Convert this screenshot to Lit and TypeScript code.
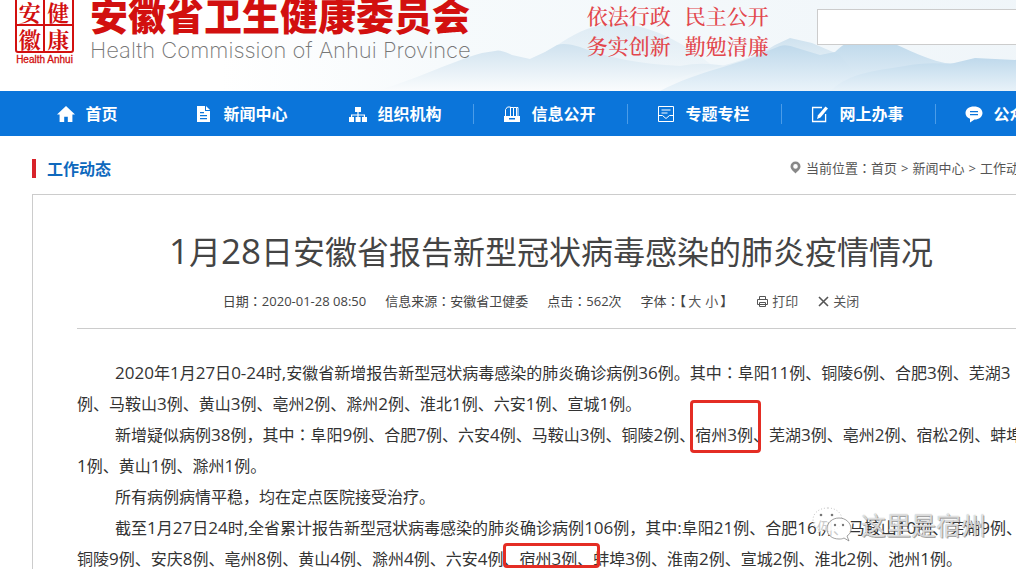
import { LitElement, html, css, svg } from "lit";
import { customElement, property } from "lit/decorators.js";

const navIcons: Record<string, unknown> = {
  home: svg`<path fill="currentColor" d="M9 1 0 9.6h2.6V17h4.6v-5.2h3.6V17h4.6V9.600H18z"/>`,
  news: svg`<path fill="currentColor" fill-rule="evenodd" d="M2 1h8v5h5v11H2zM11 1l4 4h-4zM5 7v1.300h4V7zM5 10v1.300h7V10zM5 13v1.300h7V13z"/>`,
  org: svg`<path fill="currentColor" d="M6 2h6v5H9.600v2.400H16V12h2v5h-5v-5h1.800v-1.400H9.600V12h2v5h-5v-5h1.800v-1.400H3.200V12H5v5H0v-5h2V9.400h6.400V7H6z"/>`,
  info: svg`<g fill="none" stroke="currentColor"><path d="M2.500 11V4.500l2-2.500h3v9M7.500 2.500h3V11M10.500 2.500h3V11M13.500 2.500H15V11"/></g><path fill="currentColor" fill-rule="evenodd" d="M1 11h16v6H1zM6 13v1.500h6V13z"/>`,
  topic: svg`<g fill="none" stroke="currentColor"><path d="M1.500 1.500h15v15h-15zM4.500 5h9M4.500 8h6M1.500 10.500h4l3.500 3 3.500-3h4"/></g>`,
  work: svg`<path fill="none" stroke="currentColor" stroke-width="1.300" d="M11 2.500H1.600v14h13V9"/><path fill="currentColor" d="m14.500 1.500 2.500 2-7.500 9-3.500 1.500 1-3.700z"/>`,
  chat: svg`<path fill="currentColor" fill-rule="evenodd" d="M9 1.500c5 0 8.500 2.700 8.500 6.500S14 14.500 9.500 14.500L5 17.500v-3.700C2 12.700.5 10.500.5 8 .5 4.200 4 1.500 9 1.500zM5 6v1.300h8V6zM5 9v1.300h8V9z"/>`,
};

const NAV = [
  { icon: "home", label: "首页" },
  { icon: "news", label: "新闻中心" },
  { icon: "org", label: "组织机构" },
  { icon: "info", label: "信息公开" },
  { icon: "topic", label: "专题专栏" },
  { icon: "work", label: "网上办事" },
  { icon: "chat", label: "公众互动" },
];

/** Sets figures in the Latin face and colons in a centred face. */
function typeset(text: string) {
  return text.split(/([0-9\-,:]+|：)/).map((part) =>
    part === "：" ? html`<span class="colon">：</span>` : /^[0-9\-,:]+$/.test(part) ? html`<span class="num">${part}</span>` : part
  );
}

const typeStyles = css`
  .num { font-family: "Open Sans", sans-serif; }
  .colon { font-family: "Noto Sans CJK TC", sans-serif; }
  a { color: inherit; text-decoration: none; }
`;

@customElement("site-header")
class SiteHeader extends LitElement {
  static styles = css`
    :host { display: block; position: relative; height: 91px; overflow: hidden; background: #fff; }
    .hills { position: absolute; inset: 0; width: 100%; height: 100%; }
    .bar { position: relative; height: 100%; box-sizing: border-box; padding: 0 32px 24px 14px; display: flex; align-items: flex-end; }
    .brand { display: flex; align-items: flex-end; gap: 15px; color: #d2100f; }
    .logo { width: 61px; text-align: center; }
    .seal { display: grid; grid-template-columns: 1fr 1fr; margin: 0 1px; border: 2px solid; border-radius: 3px; font: 700 22px/25px "Noto Serif CJK SC", "Noto Sans CJK SC", serif; }
    .seal span:nth-child(odd) { border-right: 2px solid; }
    .seal span:nth-child(-n + 2) { border-bottom: 2px solid; }
    .sub { font: 10px/14px "Liberation Sans", Arial, sans-serif; -webkit-text-stroke: 0.3px; white-space: nowrap; }
    .name { margin: 0; font: 900 38px/38px "Noto Sans CJK SC", sans-serif; white-space: nowrap; }
    .en { margin: 0; font: 200 22px/34px Inter, "Liberation Sans", sans-serif; color: #777; white-space: nowrap; }
    .motto { margin: 0 0 7px 116px; font: 500 21px/30px "Noto Serif CJK SC", "Noto Sans CJK SC", serif; color: #e2474d; white-space: nowrap; }
    .motto div { display: flex; gap: 14px; }
    .search { flex: 1; min-width: 0; height: 36px; box-sizing: border-box; margin: 0 0 22px 48px; border: 1px solid #ccc; background: #fff; padding: 0 10px; font: 14px "Noto Sans CJK SC", sans-serif; }
  `;
  render() {
    return html`
      <svg class="hills" viewBox="0 0 1102 91" preserveAspectRatio="none" aria-hidden="true">
        <defs>
          <linearGradient id="sky" x1="0" x2="1"><stop offset=".2" stop-color="#fff"/><stop offset=".4" stop-color="#f6fafc"/><stop offset="1" stop-color="#eff5f9"/></linearGradient>
          <linearGradient id="far" x1="0" x2="0" y1="0" y2="1"><stop offset="0" stop-color="#cfe2ef"/><stop offset="1" stop-color="#fafcfd"/></linearGradient>
          <linearGradient id="near" x1="0" x2="0" y1="0" y2="1"><stop offset="0" stop-color="#b5d3e8"/><stop offset="1" stop-color="#e8f2f9"/></linearGradient>
        </defs>
        <rect width="1102" height="91" fill="url(#sky)"/>
        <path fill="url(#far)" opacity=".6" d="M440 91C480 70 530 66 562 42 580 30 600 22 625 24 660 28 700 50 740 91z"/>
        <path fill="url(#far)" d="M375 91C410 82 450 62 482 53L495 51Q500 49 512 55L530 59 545 52 557 45Q565 42 580 47 620 63 680 66 710 60 740 70L800 91z"/>
        <path fill="url(#far)" d="M670 80C710 68 750 62 775 45L790 38 812 43 840 55 870 91H670z"/>
        <path fill="url(#near)" opacity=".9" d="M660 91C700 70 740 65 765 52L780 46Q787 44 797 48L820 55 835 52C845 42 860 35 878 38 900 44 920 58 945 63L1000 66 1050 64 1102 60V91z"/>
        <path fill="url(#near)" d="M830 91C850 72 880 70 905 66Q925 62 950 64L975 58 1015 60 1060 54 1102 50V91z"/>
      </svg>
      <div class="bar">
        <div class="brand">
          <div class="logo">
            <div class="seal"><span>安</span><span>健</span><span>徽</span><span>康</span></div>
            <div class="sub">Health Anhui</div>
          </div>
          <div>
            <h1 class="name">安徽省卫生健康委员会</h1>
            <p class="en" lang="en">Health Commission of Anhui Province</p>
          </div>
        </div>
        <div class="motto">
          <div><span>依法行政</span><span>民主公开</span></div>
          <div><span>务实创新</span><span>勤勉清廉</span></div>
        </div>
        <input class="search" type="search" aria-label="搜索" />
      </div>`;
  }
}

@customElement("site-nav")
class SiteNav extends LitElement {
  static styles = css`
    :host { display: block; background: #0b75da; }
    .items { display: grid; grid-template-columns: repeat(7, 1fr); padding: 0 13px 0 11px; align-items: center; height: 45px; }
    .item { display: flex; justify-content: center; align-items: center; gap: 10px; height: 20px; border-left: 1px solid transparent; color: #fff; text-decoration: none; font: 700 16px/18px "Noto Sans CJK SC", sans-serif; white-space: nowrap; }
    .item:nth-child(n + 4) { border-color: #4b9ce8; }
    .item span { padding-bottom: 2px; }
    .icon { width: 18px; height: 18px; margin-left: -2px; }
  `;
  render() {
    return html`<nav class="items">
      ${NAV.map((n) => html`<a class="item" href="#"><svg class="icon" viewBox="0 0 18 18" aria-hidden="true">${navIcons[n.icon]}</svg><span>${n.label}</span></a>`)}
    </nav>`;
  }
}

@customElement("case-report")
class CaseReport extends LitElement {
  @property() heading = "";
  static styles = [typeStyles, css`
    :host { display: block; border: 1px solid #ccc; padding: 32px 44px; }
    .title { margin: 0; text-align: center; font: 400 32px/46px "Noto Sans CJK SC", sans-serif; color: #444; }
    .title .num { font-size: 35px; line-height: 1; }
    .meta { display: flex; justify-content: center; gap: 19px; margin-top: 18px; padding: 0 20px 17px 0; border-bottom: 1px solid #ccc; font: 13px/20px "Open Sans", "Noto Sans CJK SC", sans-serif; color: #444; white-space: nowrap; }
    .tool { display: flex; align-items: center; gap: 3px; border: 0; background: none; padding: 0; margin-left: 4px; font: inherit; color: #555; }
    .size { border: 0; background: none; padding: 0; margin: 0 2px; font: inherit; color: #555; }
    .tool svg { width: 13px; height: 13px; }
    .tool + .tool { margin-left: 0; }
    .body { margin-top: 28px; font: 16px/31px "Noto Sans CJK SC", sans-serif; color: #333; }
    .body p { margin: 0; text-indent: 38px; }
    .body .num { font-size: 17px; line-height: 1; }
    .mark { position: relative; display: inline-block; text-indent: 0; background: none; color: inherit; }
    .mark::after { content: ""; position: absolute; border: 3px solid #e42d24; border-radius: 4px; }
    .tall::after { inset: -19px -8px -3px -5px; }
    .wide::after { inset: 0 -23px 6px -17px; }
  `];
  render() {
    return html`
      <h2 class="title">${typeset(this.heading)}</h2>
      <div class="meta">
        <span>日期<span class="colon">：</span>2020-01-28 08:50</span>
        <span>信息来源<span class="colon">：</span>安徽省卫健委</span>
        <span>点击<span class="colon">：</span>562次</span>
        <span>字体<span class="colon">：</span>【<button class="size">大</button><button class="size">小</button>】</span>
        <button class="tool"><svg viewBox="0 0 13 13" fill="none" stroke="currentColor" aria-hidden="true"><path d="M3.500 4V1.500h6V4M3 9.500H1.500v-5h10v5H10M3.500 7.500h6v4h-6zM4 9.500h5"/></svg>打印</button>
        <button class="tool"><svg viewBox="0 0 13 13" stroke="currentColor" stroke-width="1.600" aria-hidden="true"><path d="m2 2 9 9M11 2l-9 9"/></svg>关闭</button>
      </div>
      <div class="body">
        <p>${typeset("2020年1月27日0-24时,安徽省新增报告新型冠状病毒感染的肺炎确诊病例36例。其中：阜阳11例、铜陵6例、合肥3例、芜湖3例、马鞍山3例、黄山3例、亳州2例、滁州2例、淮北1例、六安1例、宣城1例。")}</p>
        <p>${typeset("新增疑似病例38例，其中：阜阳9例、合肥7例、六安4例、马鞍山3例、铜陵2例、")}<mark class="mark tall">${typeset("宿州3例")}</mark>${typeset("、芜湖3例、亳州2例、宿松2例、蚌埠1例、黄山1例、滁州1例。")}</p>
        <p>所有病例病情平稳，均在定点医院接受治疗。</p>
        <p>${typeset("截至1月27日24时,全省累计报告新型冠状病毒感染的肺炎确诊病例106例，其中:阜阳21例、合肥16例、马鞍山10例、芜湖9例、铜陵9例、安庆8例、亳州8例、黄山4例、滁州4例、六安4例、")}<mark class="mark wide">${typeset("宿州3例")}</mark>${typeset("、蚌埠3例、淮南2例、宣城2例、淮北2例、池州1例。")}</p>
      </div>`;
  }
}

@customElement("app-root")
class AppRoot extends LitElement {
  static styles = [typeStyles, css`
    :host { display: block; position: relative; height: 100vh; overflow: hidden; background: #fff; }
    .page { min-width: 1102px; }
    .content { padding: 0 32px; }
    .crumbs { display: flex; align-items: center; justify-content: space-between; height: 58px; }
    .section { margin: 7px 0 0; padding-left: 11px; border-left: 4px solid #d8232a; font: 700 16px/19px "Noto Sans CJK SC", sans-serif; color: #0f69bd; }
    .path { display: flex; align-items: center; gap: 4px; margin: 5px 38px 0 0; font: 13px/20px "Open Sans", "Noto Sans CJK SC", sans-serif; color: #555; white-space: nowrap; }
    .pin { width: 11px; height: 13px; margin-right: 1px; }
    .watermark { position: absolute; left: 812px; top: 504px; display: flex; align-items: center; gap: 9px; color: rgba(255, 255, 255, 0.7); font: 25px/40px "Noto Sans CJK SC", sans-serif; text-shadow: 1px 1px 0 rgba(60, 60, 60, 0.45), 0 0 1px #999; white-space: nowrap; }
    .watermark svg { width: 40px; height: 36px; }
  `];
  render() {
    return html`
      <div class="page">
        <site-header></site-header>
        <site-nav></site-nav>
        <main class="content">
          <div class="crumbs">
            <h2 class="section">工作动态</h2>
            <div class="path">
              <svg class="pin" viewBox="0 0 11 13" aria-hidden="true"><path fill="#888" fill-rule="evenodd" d="M5.500.5a5 5 0 0 1 5 5c0 3-3.500 5-5 7-1.500-2-5-4-5-7a5 5 0 0 1 5-5zm0 2.600a2.300 2.300 0 1 0 0 4.600 2.300 2.300 0 0 0 0-4.600z"/></svg>
              <span>当前位置<span class="colon">：</span><a href="#">首页</a></span><span>&gt;</span><a href="#">新闻中心</a><span>&gt;</span><a href="#">工作动态</a>
            </div>
          </div>
          <case-report heading="1月28日安徽省报告新型冠状病毒感染的肺炎疫情情况"></case-report>
        </main>
      </div>
      <div class="watermark">
        <svg viewBox="0 0 40 36" aria-hidden="true">
          <g fill="#fff" fill-opacity=".75" stroke="#aaa" stroke-width=".7">
            <path stroke-dasharray="1 2" d="M16 2C7 2 1 7 1 14c0 4 2 7 6 9l-1 4 5-3c2 1 4 1 6 1 8-1 13-5 13-11 0-7-6-12-14-12z"/>
            <path stroke="#777" d="M27 12c-7 0-12 5-12 11s5 10 12 10c2 0 3 0 5-1l5 3-2-5c3-2 4-4 4-7 0-6-5-11-12-11z"/>
          </g>
          <g fill="#777"><circle cx="9" cy="9" r="1.300"/><circle cx="20" cy="9" r="1.300"/><circle cx="23" cy="19" r="1.200"/><circle cx="31" cy="19" r="1.200"/></g>
        </svg>
        <span>这里是宿州</span>
      </div>`;
  }
}
